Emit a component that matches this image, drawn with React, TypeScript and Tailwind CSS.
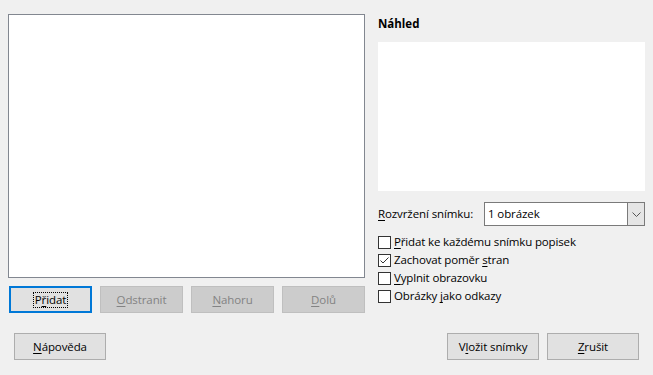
import React from "react";

const font = { fontFamily: '"Open Sans", "Noto Sans", sans-serif' };

function U({ children }: { children: string }) {
  return <span className="underline underline-offset-2">{children}</span>;
}

function Button({
  children,
  disabled,
  focused,
  className = "",
}: {
  children: React.ReactNode;
  disabled?: boolean;
  focused?: boolean;
  className?: string;
}) {
  const tone = disabled
    ? "border border-[#bfbfbf] bg-[#cccccc] text-[#838383]"
    : focused
      ? "border-2 border-[#0078d7] bg-[#e1e1e1] text-black"
      : "border border-[#adadad] bg-[#e1e1e1] text-black";
  return (
    <div className={`flex h-[27px] items-center justify-center text-[11.5px] tracking-[-0.1px] ${tone} ${className}`}>
      {focused ? (
        <span className="border border-dotted border-black px-[1px] leading-[14px]">{children}</span>
      ) : (
        children
      )}
    </div>
  );
}

function Check({ checked, children }: { checked?: boolean; children: React.ReactNode }) {
  return (
    <div className="flex h-[18px] items-center gap-[3px]">
      <div className="flex h-[13px] w-[13px] items-center justify-center border border-[#333333] bg-white">
        {checked && (
          <svg width="11" height="11" viewBox="0 0 11 11">
            <path d="M1.5 5.5 L4 8 L9.5 2.5" fill="none" stroke="#333" strokeWidth="1" />
          </svg>
        )}
      </div>
      <span className="text-[11.5px] tracking-[-0.15px] text-black">{children}</span>
    </div>
  );
}

export default function App() {
  return (
    <div className="relative h-[375px] w-[653px] bg-[#f0f0f0] text-black" style={font}>
      <div className="flex">
        <div className="ml-[8px] mt-[14px] w-[357px]">
          <div className="h-[264px] border border-[#828790] bg-white" />
          <div className="mt-[8px] ml-[1px] grid grid-cols-4 gap-x-[8px]">
            <Button focused>
              P<U>ř</U>idat
            </Button>
            <Button disabled>
              <U>O</U>dstranit
            </Button>
            <Button disabled>
              <U>N</U>ahoru
            </Button>
            <Button disabled>
              <U>D</U>olů
            </Button>
          </div>
        </div>
        <div className="ml-[13px] mt-[15px] w-[267px]">
          <div className="h-[17px] text-[11.5px] font-bold leading-[17px]">Náhled</div>
          <div className="mt-[10px] h-[149px] bg-white" />
          <div className="mt-[11px] flex h-[24px] items-center">
            <span className="w-[106px] text-[11.5px] tracking-[-0.1px]">
              <U>R</U>ozvržení snímku:
            </span>
            <div className="flex h-[24px] flex-1 items-center border border-[#7a7a7a] bg-white">
              <span className="flex-1 pl-[3px] text-[11.5px] tracking-[-0.1px]">1 obrázek</span>
              <div className="flex h-full w-[17px] items-center justify-center border-l border-[#7a7a7a] bg-[#e5e5e5]">
                <svg width="9" height="5" viewBox="0 0 9 5">
                  <path d="M0.5 0.5 L4.5 4.5 L8.5 0.5" fill="none" stroke="#555" strokeWidth="1" />
                </svg>
              </div>
            </div>
          </div>
          <div className="mt-[7px] flex flex-col">
            <Check>
              <U>P</U>řidat ke každému snímku popisek
            </Check>
            <Check checked>
              Zachovat poměr <U>s</U>tran
            </Check>
            <Check>
              <U>V</U>yplnit obrazovku
            </Check>
            <Check>
              Obrázky <U>j</U>ako odkazy
            </Check>
          </div>
        </div>
      </div>
      <div className="mt-[20px] flex pl-[14px] pr-[14px]">
        <Button className="w-[92px]">
          <U>N</U>ápověda
        </Button>
        <div className="flex-1" />
        <Button className="w-[92px]">
          V<U>l</U>ožit snímky
        </Button>
        <Button className="ml-[8px] w-[92px]">
          <U>Z</U>rušit
        </Button>
      </div>
    </div>
  );
}
